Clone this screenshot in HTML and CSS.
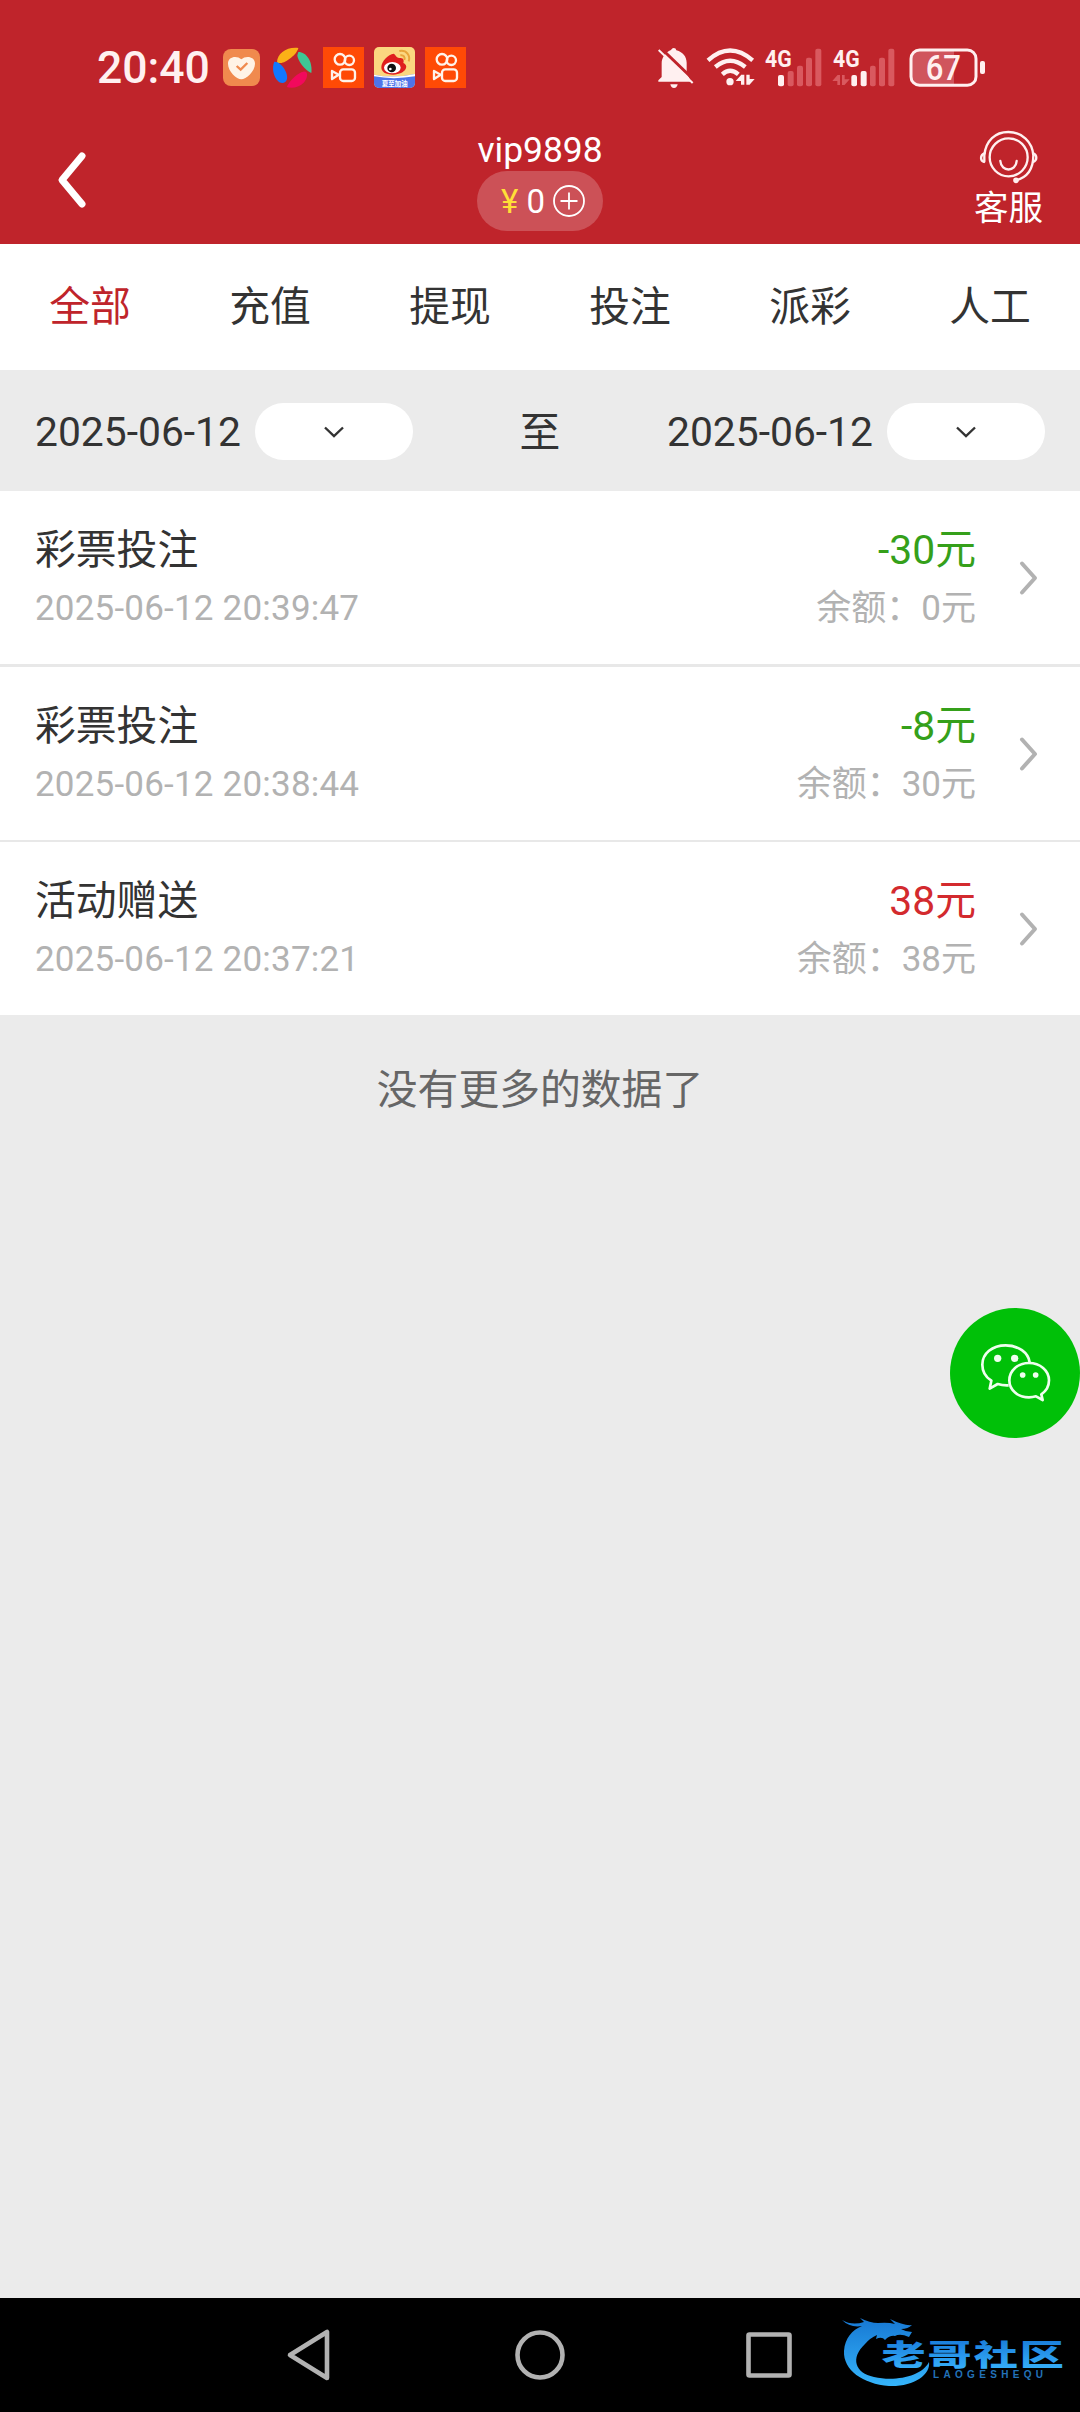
FILE: index.html
```html
<!DOCTYPE html>
<html lang="zh-CN">
<head>
<meta charset="utf-8">
<title>账户明细</title>
<link rel="stylesheet" href="styles.css">
</head>
<body>
<div class="screen">
  <header class="top">
    <div class="status">
      <div class="status-group">
        <span class="clock">20:40</span>
        <svg width="39" height="42" viewBox="426 51 117 126">
          <rect x="429" y="57" width="111" height="111" rx="24" fill="#f08a4e"/>
          <path d="M484 88C472 76 444 78 444 101C444 124 470 148 484 148C498 148 525 124 525 101C525 78 496 76 484 88Z" fill="#fff3e6"/>
          <path d="M470 108L482 119L502 99" fill="none" stroke="#f08a4e" stroke-width="7"/>
        </svg>
        <svg width="42" height="42" viewBox="573 51 126 126">
          <path d="M591 97C592 70 620 50 655 54C652 72 618 99 602 99C596 99 592 100 591 97Z" fill="#fbb017"/>
          <path d="M655 66C680 66 698 95 694 129C676 124 652 90 652 76Z" fill="#3fc795"/>
          <path d="M583 95C604 94 626 130 621 147C618 160 603 163 594 153C580 140 575 112 583 95Z" fill="#1278ff"/>
          <path d="M620 171C630 150 655 127 670 125C688 122 682 148 671 158C657 172 637 176 620 171Z" fill="#f2095c"/>
        </svg>
        <svg width="41" height="42" viewBox="729 51 123 126">
          <rect x="729" y="51" width="123" height="123" fill="#ff4a06"/>
          <g fill="none" stroke="#fff3ea" stroke-width="7" stroke-linejoin="round">
            <circle cx="780" cy="88" r="16"/><circle cx="808" cy="91" r="14"/>
            <rect x="780" y="118" width="45" height="35" rx="10"/><path d="M756 123L776 134L756 147Z"/>
          </g>
        </svg>
        <svg width="41" height="42" viewBox="882 51 123 126">
          <defs><clipPath id="wb"><rect x="882" y="51" width="123" height="123" rx="15"/></clipPath></defs>
          <g clip-path="url(#wb)">
            <rect x="882" y="51" width="123" height="123" fill="#fbd780"/>
            <path d="M882 134Q940 146 1005 132V177H882Z" fill="#4f74e8"/>
            <path d="M882 134Q940 146 1005 132V139Q940 150 882 139Z" fill="#fff"/>
            <path d="M904 112C904 94 925 72 941 71C948 74 947 82 958 84C972 82 972 93 970 99C988 106 978 132 940 134C916 134 904 126 904 112Z" fill="#df1f1e"/>
            <ellipse cx="937" cy="113" rx="25" ry="17" fill="#fff"/>
            <circle cx="935" cy="114" r="13" fill="#111"/><circle cx="931" cy="117" r="4" fill="#fff"/>
            <path d="M958 63C980 58 992 78 986 94M961 76C971 74 976 82 973 90" fill="none" stroke="#e9a53a" stroke-width="6"/>
            <text x="905" y="167" font-size="20" font-weight="700" fill="#fff" textLength="78">夏至加油</text>
          </g>
        </svg>
        <svg width="41" height="42" viewBox="729 51 123 126">
          <rect x="729" y="51" width="123" height="123" fill="#ff4a06"/>
          <g fill="none" stroke="#fff3ea" stroke-width="7" stroke-linejoin="round">
            <circle cx="780" cy="88" r="16"/><circle cx="808" cy="91" r="14"/>
            <rect x="780" y="118" width="45" height="35" rx="10"/><path d="M756 123L776 134L756 147Z"/>
          </g>
        </svg>
      </div>
      <div class="status-group status-right">
        <svg width="41" height="42" viewBox="51 51 123 126">
          <path d="M93 60Q96 54 101 54Q108 54 109 61C130 67 139 80 140 98V128L153 155H55V151L65 141V100C65 84 76 66 93 60Z" fill="#fff0f0"/>
          <path d="M91 163H113Q111 174 102 174Q93 174 91 163Z" fill="#fff0f0"/>
          <path d="M62 54L162 150" stroke="#bf242b" stroke-width="9"/>
          <path d="M56 60L158 159" stroke="#fff0f0" stroke-width="6"/>
        </svg>
        <svg width="50" height="42" viewBox="198 51 150 126">
          <g fill="none" stroke="#fff0f0" stroke-width="13">
            <path d="M204 91Q270 32 338 91"/><path d="M226 111Q270 74 316 111"/><path d="M247 133Q270 112 295 133"/>
          </g>
          <circle cx="270" cy="155" r="11" fill="#fff0f0"/>
          <path d="M303 134V164H313V134ZM304 134L287 153H306ZM319 134V164H329V134ZM327 166L344 147H325Z" fill="#fff0f0"/>
        </svg>
        <svg class="signal" width="60" height="42" viewBox="372 51 180 126">
          <text class="net" x="375" y="110" textLength="80" lengthAdjust="spacingAndGlyphs">4G</text>
          <rect x="414" y="135" width="18" height="34" rx="6" fill="#fff0f0"/>
          <g fill="#d9595f"><rect x="443" y="123" width="18" height="46" rx="6"/><rect x="471" y="107" width="18" height="62" rx="6"/><rect x="498" y="83" width="18" height="86" rx="6"/><rect x="526" y="56" width="18" height="113" rx="6"/></g>
        </svg>
        <svg class="signal" width="66" height="42" viewBox="576 51 198 126">
          <text class="net" x="579" y="110" textLength="80" lengthAdjust="spacingAndGlyphs">4G</text>
          <g fill="#fff0f0"><rect x="634" y="135" width="17" height="34" rx="6"/><rect x="662" y="123" width="18" height="46" rx="6"/></g>
          <g fill="#d9595f"><rect x="690" y="107" width="17" height="62" rx="6"/><rect x="717" y="83" width="18" height="86" rx="6"/><rect x="745" y="56" width="18" height="113" rx="6"/>
          <path d="M592 135V165H600V135ZM592 136L577 153H594ZM606 135V165H614V135ZM613 166L629 148H611Z"/></g>
        </svg>
        <svg width="82" height="42" viewBox="798 51 246 126">
          <path d="M838 62H942V164H838Q814 164 814 138V88Q814 62 838 62Z" fill="#d0555d"/>
          <rect x="813" y="60" width="195" height="106" rx="26" fill="none" stroke="#fff0f0" stroke-width="9"/>
          <rect x="1020" y="93" width="15" height="39" rx="6" fill="#fff0f0"/>
          <text class="charge" x="857" y="149" textLength="106" lengthAdjust="spacingAndGlyphs">67</text>
        </svg>
      </div>
    </div>
    <div class="bar">
      <svg class="back" width="38" height="60" viewBox="0 0 38 60"><path d="M28 7L8 31L28 55" fill="none" stroke="#fff" stroke-width="7" stroke-linecap="round" stroke-linejoin="round"/></svg>
      <div class="account">
        <div class="name">vip9898</div>
        <div class="balance-pill">
          <span class="yen">¥</span><span class="money">0</span>
          <svg width="32" height="32" viewBox="0 0 32 32" fill="none" stroke="#fff" stroke-width="1.8"><circle cx="16" cy="16" r="15"/><path d="M7.500 16H24.500M16 7.500V24.500"/></svg>
        </div>
      </div>
      <div class="service">
        <svg width="60" height="54" viewBox="237 60 180 162" fill="none" stroke="#fff0f0" stroke-width="7" stroke-linecap="round">
          <circle cx="326" cy="142" r="57"/>
          <path d="M301 153C304 187 347 187 350 153"/>
          <path d="M253 154V136C257 92 286 66 325 66C366 66 397 95 400 136C400 178 380 203 348 211"/>
          <path d="M253 130C240 136 240 152 252 156M400 130C412 136 412 150 400 156"/>
          <circle cx="348" cy="211" r="5" fill="#fff0f0"/>
        </svg>
        <span>客服</span>
      </div>
    </div>
  </header>

  <nav class="tabs">
    <span class="tab active">全部</span><span class="tab">充值</span><span class="tab">提现</span><span class="tab">投注</span><span class="tab">派彩</span><span class="tab">人工</span>
  </nav>

  <section class="range">
    <div class="date"><span>2025-06-12</span>
      <span class="drop"><svg width="22" height="14" viewBox="0 0 22 14"><path d="M2 2.500L11 11L20 2.500" fill="none" stroke="#333" stroke-width="2.400"/></svg></span></div>
    <span class="to">至</span>
    <div class="date"><span>2025-06-12</span>
      <span class="drop"><svg width="22" height="14" viewBox="0 0 22 14"><path d="M2 2.500L11 11L20 2.500" fill="none" stroke="#333" stroke-width="2.400"/></svg></span></div>
  </section>

  <main class="list">
    <article class="row wide-line">
      <div class="info"><div class="title">彩票投注</div><div class="sub time">2025-06-12 20:39:47</div></div>
      <div class="amount"><div class="title out">-30元</div><div class="sub">余额：0元</div></div>
      <svg class="arrow" width="22" height="38" viewBox="0 0 22 38"><path d="M5 4.500L18 19L5 33.500"/></svg>
    </article>
    <article class="row">
      <div class="info"><div class="title">彩票投注</div><div class="sub time">2025-06-12 20:38:44</div></div>
      <div class="amount"><div class="title out">-8元</div><div class="sub">余额：30元</div></div>
      <svg class="arrow" width="22" height="38" viewBox="0 0 22 38"><path d="M5 4.500L18 19L5 33.500"/></svg>
    </article>
    <article class="row">
      <div class="info"><div class="title">活动赠送</div><div class="sub time">2025-06-12 20:37:21</div></div>
      <div class="amount"><div class="title in">38元</div><div class="sub">余额：38元</div></div>
      <svg class="arrow" width="22" height="38" viewBox="0 0 22 38"><path d="M5 4.500L18 19L5 33.500"/></svg>
    </article>
  </main>
  <p class="end">没有更多的数据了</p>

  <div class="chat">
    <svg width="130" height="130" viewBox="60 54 390 390" fill="none" stroke="#efffef" stroke-width="8" stroke-linejoin="round">
      <path d="M236 286Q219 287 203 282L179 296L184 272C164 259 157 241 157 224C157 190 187 166 227 166C265 166 295 188 299 217"/>
      <path d="M334 313C349 303 357 287 357 271C357 241 330 219 297 219C264 219 238 241 238 271C238 301 264 322 297 322Q308 322 318 319L338 330Z"/>
      <g fill="#efffef" stroke="none"><circle cx="203" cy="205" r="11"/><circle cx="254" cy="205" r="11"/><circle cx="278" cy="255" r="8.500"/><circle cx="317" cy="255" r="8.500"/></g>
    </svg>
  </div>

  <footer class="sysnav">
    <svg width="50" height="56" viewBox="0 0 50 56"><path d="M43 5V51L6 28Z"/></svg>
    <svg width="56" height="56" viewBox="0 0 56 56"><circle cx="28" cy="28" r="22.500"/></svg>
    <svg width="50" height="56" viewBox="0 0 50 56"><rect x="4.500" y="7.500" width="41" height="41" rx="1"/></svg>
    <svg class="brand" width="240" height="90" viewBox="0 10 240 90">
      <defs><linearGradient id="blue" gradientUnits="userSpaceOnUse" x1="0" y1="16" x2="0" y2="86"><stop offset="0" stop-color="#1676d2"/><stop offset="1" stop-color="#35b5fb"/></linearGradient>
      <linearGradient id="ink" x1="0" y1="0" x2="0" y2="1"><stop offset="0.200" stop-color="#1b7fdc"/><stop offset="1" stop-color="#3bb8ff"/></linearGradient></defs>
      <path d="M2 20Q12 26 24 22L20 18Q30 23 38 23Q48 22 55 24L50 19Q64 26 72 25Q68 29 61 29Q66 32 72 32L69 37Q60 33 55 36Q50 35 45 40Q42 36 36 39L37 35Q30 38 25 44C10 58 15 73 34 77C56 82 82 76 89 62C91 75 73 87 49 86C23 84 3 70 4 51C5 38 12 30 22 26Q10 28 2 20Z" fill="url(#blue)"/>
      <text class="brand-cn" transform="translate(41.500 66) scale(1.520 1)" fill="url(#ink)" textLength="120">老哥社区</text>
      <text class="brand-en" x="93" y="78" textLength="110">LAOGESHEQU</text>
    </svg>
  </footer>
</div>
</body>
</html>
```
FILE: styles.css
```css
* { box-sizing: border-box; }
body { margin: 0; background: #ebebeb; }
svg { display: block; flex: none; }
.screen {
  width: 1080px;
  height: 2412px;
  display: flex;
  flex-direction: column;
  position: relative;
  overflow: hidden;
  font-family: Roboto, "Noto Sans CJK SC", sans-serif;
  font-size: 40.8px;
  color: #333;
  background: #ebebeb;
}
.top { height: 244px; flex: none; background: #bf242b; color: #fff; padding-top: 47px; }
.status { height: 42px; display: flex; justify-content: space-between; padding: 0 92px 0 97px; }
.status-group { display: flex; align-items: center; gap: 10px; }
.status-right { gap: 8px; }
.clock { width: 115px; font-size: 44.500px; font-weight: 500; line-height: 42px; color: #fff0f0; }
.signal { overflow: visible; }
.net { font: 700 70px Roboto, sans-serif; fill: #fff0f0; }
.charge { font: 500 104px Roboto, sans-serif; fill: #fff0f0; }
.bar { height: 155px; display: grid; grid-template-columns: 1fr 200px 1fr; }
.back { margin: 60px 0 0 54px; }
.account { display: flex; flex-direction: column; align-items: center; padding-top: 41px; }
.name { font-size: 35.400px; line-height: 41px; white-space: nowrap; }
.balance-pill {
  width: 126px;
  height: 60px;
  border-radius: 30px;
  background: #cc5157;
  display: flex;
  align-items: center;
  justify-content: center;
  gap: 8px;
  font-size: 33px;
  padding-left: 6px;
}
.yen { color: #ffdf38; }
.service { display: flex; flex-direction: column; align-items: center; justify-self: end; width: 143px; padding-top: 41px; font-size: 34.500px; line-height: 48px; }
.tabs { height: 126px; flex: none; display: grid; grid-template-columns: repeat(6, 1fr); background: #fff; line-height: 126px; text-align: center; }
.active { color: #bf242b; }
.range { height: 121px; flex: none; display: flex; align-items: center; justify-content: space-between; padding: 2px 35px 0; }
.to { padding-bottom: 4px; }
.date { display: flex; align-items: center; justify-content: space-between; width: 378px; }
.drop { width: 158px; height: 57px; border-radius: 29px; background: #fff; display: flex; align-items: center; justify-content: center; }
.list { flex: none; background: #fff; }
.row { height: 175px; display: flex; padding: 28px 41px 0 35px; border-bottom: 2px solid #e8e8e8; }
.row.wide-line { height: 176px; border-bottom-width: 3px; }
.row:last-child { height: 173px; border-bottom: 0; }
.info { flex: 1; }
.title { line-height: 62px; }
.sub { font-size: 35px; line-height: 56px; color: #b2b2b2; }
.time { letter-spacing: 0.200px; }
.amount { text-align: right; }
.out { color: #35a01a; }
.in { color: #d32a2e; }
.arrow { margin: 40px 0 0 41px; fill: none; stroke: #b2b2b2; stroke-width: 4px; stroke-linecap: round; stroke-linejoin: round; }
.end { margin: 44px 0 0; line-height: 62px; text-align: center; color: #666; }
.chat { position: absolute; right: 0; top: 1308px; width: 130px; height: 130px; border-radius: 50%; background: #00c008; }
.sysnav { height: 114px; flex: none; margin-top: auto; background: #000; display: grid; grid-template-columns: 228px 232px 96px 240px; align-items: center; padding-left: 284px; }
.sysnav svg { fill: none; stroke: #b2b2b2; stroke-width: 4.600px; stroke-linejoin: round; }
.sysnav .brand { stroke: none; }
.brand-cn { font: 900 29px "Noto Sans CJK SC", sans-serif; }
.brand-en { font: 700 10px "Liberation Sans", sans-serif; fill: #2372b8; }
```
